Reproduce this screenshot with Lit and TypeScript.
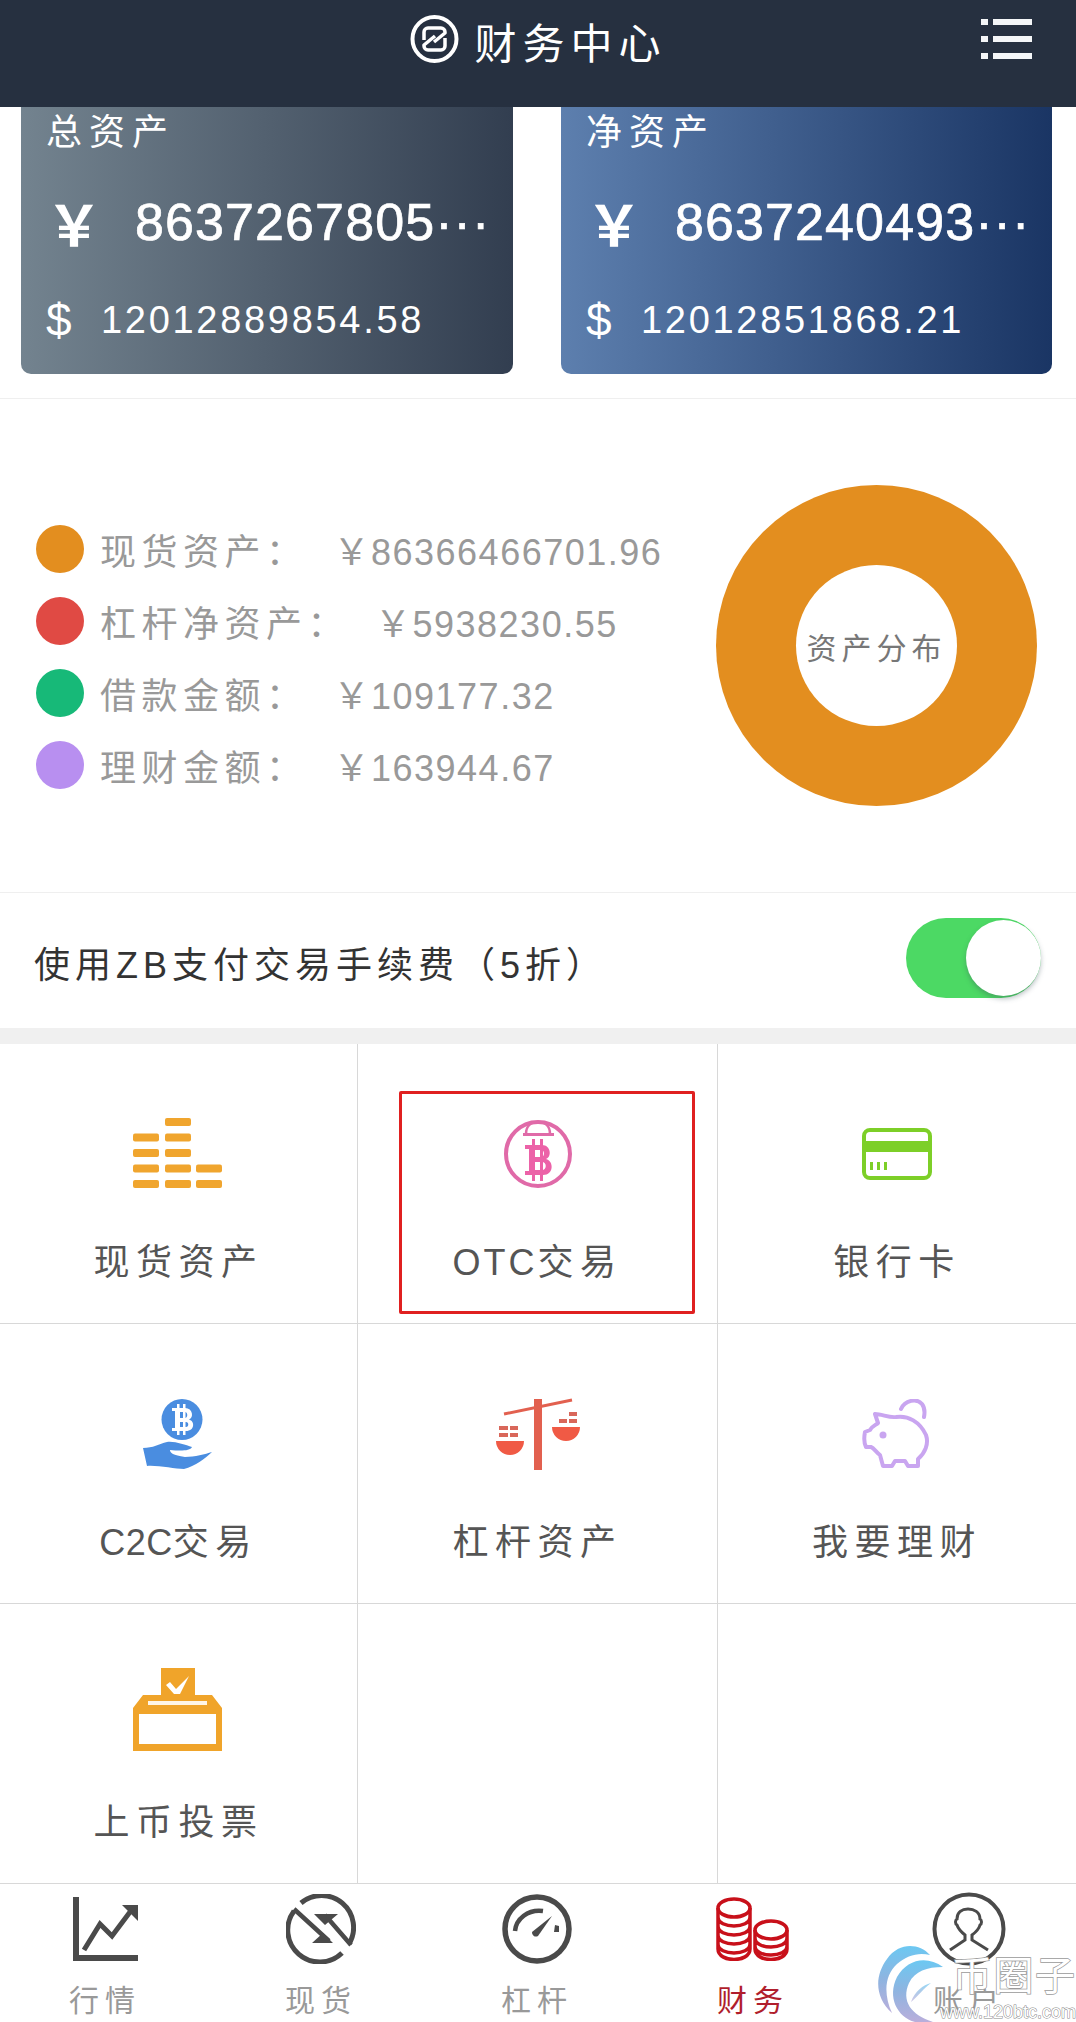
import { LitElement, html, css, svg } from "lit";
import { customElement } from "lit/decorators.js";

const I = {
  logo: html`<svg class="logo" width="49" height="48" viewBox="0 0 49 48" fill="none" stroke="#fff"><circle cx="24.5" cy="24" r="22" stroke-width="4"/><path stroke-width="3.5" stroke-linejoin="round" d="M14 25V17a4 4 0 0 1 4-4H31a4 4 0 0 1 4 4v1L24 27"/><path stroke-width="3.5" stroke-linejoin="round" d="M35 23V31a4 4 0 0 1-4 4H18a4 4 0 0 1-4-4v-1L25 21"/></svg>`,
  menu: html`<svg width="51" height="40" viewBox="0 0 51 40" fill="#f4f6f8"><rect width="7" height="6"/><rect x="12" width="39" height="6"/><rect y="17" width="7" height="6"/><rect x="12" y="17" width="39" height="6"/><rect y="34" width="7" height="6"/><rect x="12" y="34" width="39" height="6"/></svg>`,
  stacks: html`<svg width="90" height="72" viewBox="0 0 90 72" fill="#f0a52e">${[
    [32, 0], [0, 15.5], [32, 15.5], [0, 31], [32, 31], [0, 46.5], [32, 46.5], [63, 46.5], [0, 62], [32, 62], [63, 62],
  ].map(([x, y]) => svg`<rect x=${x} y=${y} width="26" height="8" rx="2"/>`)}</svg>`,
  otc: html`<svg width="68" height="70" viewBox="0 0 68 70"><circle cx="34" cy="35" r="32" fill="none" stroke="#e06aa8" stroke-width="4"/><path d="M22 15c0-8 5-12 12-12s12 4 12 12" fill="none" stroke="#e06aa8" stroke-width="2.5"/><rect x="19" y="14" width="31" height="3" fill="#e06aa8"/><g fill="#ec62a8"><rect x="28" y="20" width="3" height="42"/><rect x="36" y="20" width="3" height="42"/><path fill-rule="evenodd" d="M21 26H38C47 26 48 38 42 40C50 42 50 56 39 56H21V52H25V30H21ZM31 31V38H37C41 38 41 31 37 31ZM31 43V51H38C43 51 43 43 38 43Z"/></g></svg>`,
  card: html`<svg width="70" height="52" viewBox="0 0 70 52" fill="#7dcf28"><rect x="2" y="2" width="66" height="48" rx="6" fill="none" stroke="#7dcf28" stroke-width="4"/><rect x="2" y="13" width="66" height="11"/><rect x="8" y="34" width="3" height="8"/><rect x="15" y="34" width="3" height="8"/><rect x="22" y="34" width="3" height="8"/></svg>`,
  hand: html`<svg width="70" height="70" viewBox="0 0 70 70"><circle cx="39" cy="20.5" r="20.5" fill="#4a8de0"/><g fill="#fff"><rect x="34" y="5" width="2.5" height="31"/><rect x="40" y="5" width="2.5" height="31"/><path fill-rule="evenodd" d="M29 9H42C50 9 51 19 46 20.5C52 22 52 32 43 32H29V29H32V12H29ZM37 13V19H42C45 19 45 13 42 13ZM37 23V28H43C46 28 46 23 43 23Z"/></g><path fill="#4a8de0" d="M0 49C10 49 16 45 24 43C32 42 42 46 49 48C47 52 38 52 27 51C27 54 30 56 42 58C52 58 62 55 69 53C63 59 52 67 41 70C32 70 14 66 4 67Z"/></svg>`,
  scale: html`<svg width="84" height="72" viewBox="0 0 84 72"><path d="M8 16L76 2" stroke="#e2604f" stroke-width="3"/><rect x="38" y="1" width="8" height="71" fill="#e2604f"/><path d="M0 43H28A14 14 0 0 1 0 43ZM56 29H84A14 14 0 0 1 56 29Z" fill="#f05a45"/><path fill="#d9675a" d="M3 28h9v4H3zM14 28h8v4h-8zM3 35h9v4H3zM14 35h8v4h-8zM73 14h8v4h-8zM63 21h8v4h-8zM73 21h8v4h-8z"/></svg>`,
  pig: html`<svg width="70" height="70" viewBox="0 0 70 70" fill="none" stroke="#c9a5f0" stroke-width="4" stroke-linejoin="round" stroke-linecap="round"><path d="M13 15C20 15 27 19 34 18C46 16 58 23 64 36C67 45 63 54 56 60V67H46L43 62H33L30 67H21L18 56C14 53 12 49 9 48H4C2 44 2 38 3 33L8 31C10 27 14 26 16 24Z"/><path d="M39 10C43 1 55 -1 60 5C63 9 63 13 62 18"/><circle cx="21" cy="36" r="3.500" fill="#c9a5f0" stroke="none"/></svg>`,
  ballot: html`<svg class="shift" width="89" height="83" viewBox="0 0 89 83" fill="#f0a42a"><path d="M0 40L10 27H28V0H62V27H79L89 40V83H0Z"/><path d="M15 33H74V37H15Z" fill="#fff5e6"/><rect x="6" y="46" width="77" height="30" fill="#fff"/><path d="M33 17L37 14L43 21L56 8L47 26H41Z" fill="#fff"/></svg>`,
  trend: html`<svg width="65" height="64" viewBox="0 0 65 64" fill="#4a4a4a"><path d="M0 0H6V58H65V64H0Z"/><path d="M11 53L27 27L39 39L57 15" fill="none" stroke="#4a4a4a" stroke-width="5"/><path d="M49 8H65V24Z"/></svg>`,
  spot: html`<svg width="70" height="70" viewBox="0 0 70 70" fill="none" stroke="#4a4a4a" stroke-width="5"><path d="M15 9A32 32 0 0 1 63 50"/><path d="M8 17A32 32 0 0 0 56 59"/><path d="M8 15L43 47M39 21L65 51" stroke-width="4.500"/><path d="M28 20H52L39 31ZM26 49H47L37 39Z" fill="#4a4a4a" stroke="none"/></svg>`,
  gauge: html`<svg width="70" height="70" viewBox="0 0 70 70" fill="none" stroke="#4a4a4a"><circle cx="35" cy="35" r="32" stroke-width="5.500"/><path d="M13 37C14 25 26 15 41 17" stroke-width="4.500"/><path d="M50 22L36 42A4 4 0 0 1 30 38Z" fill="#4a4a4a" stroke="none"/><path d="M53 31L57 32V38H52Z" fill="#4a4a4a" stroke="none"/></svg>`,
  coins: html`<svg width="74" height="64" viewBox="0 0 74 64" fill="none" stroke="#c8101a" stroke-width="3.500"><ellipse cx="18" cy="11" rx="16" ry="9"/><path d="M2 11V52C2 66 34 66 34 52V11M2 20C2 32 34 32 34 20M2 29C2 41 34 41 34 29M2 38C2 50 34 50 34 38M2 47C2 59 34 59 34 47"/><ellipse cx="55" cy="33" rx="16" ry="9"/><path d="M39 33V52C39 66 71 66 71 52V33M39 41C39 53 71 53 71 41M39 49C39 61 71 61 71 49"/></svg>`,
  user: html`<svg width="74" height="74" viewBox="0 0 74 74" fill="none" stroke="#4a4a4a"><circle cx="37" cy="37" r="34.500" stroke-width="4"/><path d="M18 58L33 48V43C28 39 26 36 25 33C23 32 23 28 25 27C25 20 30 17 36 17C42 17 48 20 48 27C50 28 50 32 48 33C47 37 44 40 40 43V48L56 58" stroke-width="3"/></svg>`,
  swoosh: html`<svg width="66" height="77" viewBox="0 0 66 77"><defs><linearGradient id="wm" x1="0" y1="0" x2="0" y2="1"><stop offset="0" stop-color="#6cc8f2"/><stop offset=".5" stop-color="#8fb4e0"/><stop offset="1" stop-color="#b9aedb"/></linearGradient></defs><path fill="url(#wm)" d="M53 10C42 -2 22 -3 10 14C-2 30 -3 52 15 68C6 48 8 30 20 19C30 10 42 7 53 10Z"/><path fill="url(#wm)" d="M66 22C50 10 30 14 20 32C10 52 20 72 38 77H56C34 70 24 56 32 38C38 26 50 22 66 22Z"/><path fill="url(#wm)" d="M34 57C38 46 46 40 54 38C46 44 42 50 34 57Z" opacity=".7"/></svg>`,
};

const legend = [
  ["#e38e1f", "现货资产：", "￥86366466701.96"],
  ["#e04a44", "杠杆净资产：", "￥5938230.55"],
  ["#17b978", "借款金额：", "￥109177.32"],
  ["#b88ff0", "理财金额：", "￥163944.67"],
];

const tiles = [
  [I.stacks, html`现货资产`], [I.otc, html`<span class="latin">OTC</span>交易`], [I.card, html`银行卡`],
  [I.hand, html`<span class="tight">C2C</span>交易`], [I.scale, html`杠杆资产`], [I.pig, html`我要理财`],
  [I.ballot, html`上币投票`], [null, ""], [null, ""],
];

const tabs = [
  [I.trend, "行情", false], [I.spot, "现货", false], [I.gauge, "杠杆", false],
  [I.coins, "财务", true], [I.user, "账户", false],
];

@customElement("app-root")
export class AppRoot extends LitElement {
  static styles = css`
    :host {
      display: block; position: relative; width: 1076px; height: 2022px; overflow: hidden;
      background: #fff;
      font-family: "Liberation Sans", "Noto Sans CJK SC", sans-serif;
    }
    header {
      height: 107px; background: #263040; color: #fff; box-sizing: border-box; padding-top: 15px;
      display: grid; grid-template-columns: 1fr auto 1fr; align-items: start;
    }
    .brand { grid-column: 2; display: flex; align-items: flex-start; gap: 15px; margin-right: 5px; }
    .brand span { font-size: 42px; line-height: 60px; letter-spacing: 6px; margin-right: -6px; }
    .menu { justify-self: end; padding-top: 4px; margin-right: 44px; }
    .assets {
      height: 292px; box-sizing: border-box; padding: 0 24px 24px 21px; border-bottom: 1px solid #efefef;
      display: flex; justify-content: space-between;
    }
    .acard {
      width: 492px; box-sizing: border-box; padding-left: 25px; color: #fff;
      border-radius: 0 0 10px 10px; display: flex; flex-direction: column;
    }
    .acard.a { background: linear-gradient(90deg, #73838f, #323e50); }
    .acard.b { width: 491px; background: linear-gradient(90deg, #5d7fae, #1a3564); }
    .atitle { height: 46px; line-height: 51px; font-size: 36px; letter-spacing: 7px; }
    .amain { height: 60px; margin-top: 39px; display: flex; align-items: center; }
    .yen { width: 89px; flex: none; font-size: 56px; font-weight: 700; line-height: 60px; margin-top: 10px; }
    .num { font-size: 52px; letter-spacing: 1.100px; line-height: 60px; -webkit-text-stroke: .7px #fff; white-space: nowrap; }
    .asub { height: 50px; margin-top: 43px; display: flex; align-items: center; }
    .dollar { width: 55px; flex: none; font-size: 46px; line-height: 50px; }
    .subnum { font-size: 38px; letter-spacing: 2.700px; line-height: 50px; white-space: nowrap; }
    .chart {
      height: 494px; box-sizing: border-box; padding: 0 39px 0 36px; border-bottom: 1px solid #efefef;
      display: flex; align-items: center; justify-content: space-between;
    }
    .legend { margin-top: 22px; display: flex; flex-direction: column; }
    .lrow { height: 72px; display: flex; align-items: center; color: #999; }
    .dot { width: 48px; height: 48px; border-radius: 50%; margin-right: 16px; flex: none; }
    .llabel { font-size: 36px; letter-spacing: 5.500px; white-space: nowrap; }
    .lval { font-size: 36px; letter-spacing: 1.500px; margin-left: 26px; white-space: nowrap; }
    .donut {
      width: 321px; height: 321px; border-radius: 50%; background: #e38e1f;
      display: flex; align-items: center; justify-content: center; flex: none;
    }
    .hole {
      width: 161px; height: 161px; border-radius: 50%; background: #fff; color: #777;
      font-size: 30px; letter-spacing: 5px; display: flex; align-items: center; justify-content: center; white-space: nowrap;
    }
    .fee {
      height: 135px; box-sizing: border-box; padding: 0 35px 0 34px;
      display: flex; align-items: center; justify-content: space-between; color: #333;
    }
    .fee > span { font-size: 36px; letter-spacing: 5px; margin-top: 2px; white-space: nowrap; }
    .toggle { width: 135px; height: 80px; border-radius: 40px; background: #4cd964; position: relative; margin-top: -6px; }
    .knob {
      position: absolute; right: 0; top: 2px; width: 75px; height: 76px; border-radius: 50%; background: #fff;
      box-shadow: 0 3px 5px rgba(60, 80, 90, .35);
    }
    .band { height: 16px; background: #f0f0f0; }
    .grid { display: grid; grid-template-columns: 358px 360px 358px; grid-auto-rows: 280px; }
    .cell {
      position: relative; box-sizing: border-box; border-right: 1px solid #d8d8d8; border-bottom: 1px solid #d8d8d8;
      padding-top: 65px; display: flex; flex-direction: column; align-items: center;
    }
    .cell:nth-child(3n) { border-right: 0; }
    .cell:nth-child(3n + 1) .icon { padding-right: 2px; }
    .icon { height: 90px; display: flex; align-items: center; justify-content: center; }
    .shift { margin-bottom: 10px; }
    .tlabel { margin-top: 39px; line-height: 50px; font-size: 36px; letter-spacing: 6.500px; color: #555; white-space: nowrap; }
    .latin { letter-spacing: 3px; }
    .tight { letter-spacing: 0.500px; }
    .mark {
      position: absolute; left: 41px; top: 47px; width: 296px; height: 223px; box-sizing: border-box;
      border: 3px solid #e02020; border-radius: 2px;
    }
    nav { height: 139px; margin-left: -3px; display: grid; grid-template-columns: repeat(5, 216px); }
    .tab { display: flex; flex-direction: column; align-items: center; color: #999; }
    .tab.on { color: #b01e2c; }
    .ticon { height: 90px; display: flex; align-items: center; justify-content: center; }
    .tab span { font-size: 30px; letter-spacing: 6px; line-height: 40px; margin-top: 7px; white-space: nowrap; }
    .wm { position: absolute; left: 877px; top: 1945px; width: 199px; height: 77px; }
    .wm svg { position: absolute; left: 0; top: 0; }
    .wm b {
      position: absolute; left: 75px; top: 6px; font-weight: 400; font-size: 40px; line-height: 50px; letter-spacing: 1.500px; color: #fff;
      -webkit-text-stroke: 1.500px #9a9a9a; paint-order: stroke fill; white-space: nowrap;
    }
    .wm i {
      position: absolute; left: 63px; top: 58px; font-style: normal; font-size: 18px; line-height: 18px; color: #fff;
      -webkit-text-stroke: 1px #888; paint-order: stroke fill; white-space: nowrap;
    }
  `;

  render() {
    return html`
      <header>
        <div class="brand">${I.logo}<span>财务中心</span></div>
        <div class="menu">${I.menu}</div>
      </header>
      <section class="assets">
        <div class="acard a">
          <div class="atitle">总资产</div>
          <div class="amain"><span class="yen">￥</span><span class="num">8637267805···</span></div>
          <div class="asub"><span class="dollar">$</span><span class="subnum">12012889854.58</span></div>
        </div>
        <div class="acard b">
          <div class="atitle">净资产</div>
          <div class="amain"><span class="yen">￥</span><span class="num">8637240493···</span></div>
          <div class="asub"><span class="dollar">$</span><span class="subnum">12012851868.21</span></div>
        </div>
      </section>
      <section class="chart">
        <div class="legend">
          ${legend.map(([c, l, v]) => html`<div class="lrow"><i class="dot" style="background:${c}"></i><span class="llabel">${l}</span><span class="lval">${v}</span></div>`)}
        </div>
        <div class="donut"><div class="hole">资产分布</div></div>
      </section>
      <section class="fee"><span>使用ZB支付交易手续费（5折）</span><div class="toggle"><div class="knob"></div></div></section>
      <div class="band"></div>
      <section class="grid">
        ${tiles.map(([icon, label], i) => html`<div class="cell">
          ${icon ? html`<div class="icon">${icon}</div><div class="tlabel">${label}</div>` : ""}
          ${i === 1 ? html`<div class="mark"></div>` : ""}
        </div>`)}
      </section>
      <nav>
        ${tabs.map(([icon, label, on]) => html`<div class="tab ${on ? "on" : ""}"><div class="ticon">${icon}</div><span>${label}</span></div>`)}
      </nav>
      <div class="wm">${I.swoosh}<b>币圈子</b><i>www.120btc.com</i></div>
    `;
  }
}
